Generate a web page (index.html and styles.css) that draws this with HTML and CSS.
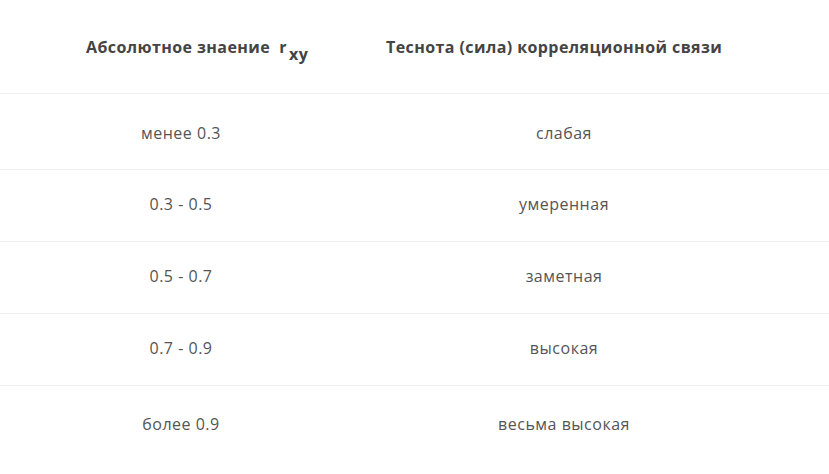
FILE: index.html
```html
<!DOCTYPE html>
<html lang="ru">
<head>
<meta charset="utf-8">
<link rel="stylesheet" href="styles.css">
</head>
<body>
<div class="corr">
  <div class="row head">
    <div class="cell h1">Абсолютное знаение&nbsp;&nbsp;r<sub>xy</sub></div>
    <div class="cell h2">Теснота (сила) корреляционной связи</div>
  </div>
  <div class="row first"><div class="cell">менее 0.3</div><div class="cell">слабая</div></div>
  <div class="row"><div class="cell">0.3 - 0.5</div><div class="cell">умеренная</div></div>
  <div class="row"><div class="cell">0.5 - 0.7</div><div class="cell">заметная</div></div>
  <div class="row"><div class="cell">0.7 - 0.9</div><div class="cell">высокая</div></div>
  <div class="row last"><div class="cell">более 0.9</div><div class="cell">весьма высокая</div></div>
</div>
</body>
</html>
```
FILE: styles.css
```css
html, body {
  margin: 0;
  padding: 0;
  background: #fff;
}
body {
  font-family: "Open Sans", Inter, sans-serif;
  color: #555;
}
.corr {
  width: 829px;
}
.row {
  display: grid;
  grid-template-columns: 362px 404px;
  height: 72px;
  border-bottom: 1px solid #efefef;
  box-sizing: border-box;
  font-size: 16px;
  letter-spacing: 0.5px;
  color: #555;
}
.cell {
  display: flex;
  align-items: center;
  justify-content: center;
  white-space: nowrap;
  padding-bottom: 3px;
}
.row.head {
  height: 94px;
  font-weight: 700;
  color: #444;
  letter-spacing: 0.42px;
}
.row.head .cell {
  justify-content: flex-start;
  padding-bottom: 0;
}
.h1 { padding-left: 86px; }
.h2 { padding-left: 24px; }
.h1 sub {
  font-size: 16px;
  position: relative;
  top: 7px;
  margin-left: 2px;
}
.row.first {
  height: 76px;
}
.row.first .cell { padding-bottom: 0; padding-top: 2px; }
.row.last {
  height: 89px;
  border-bottom: none;
}
.row.last .cell { padding-bottom: 14px; }
```
